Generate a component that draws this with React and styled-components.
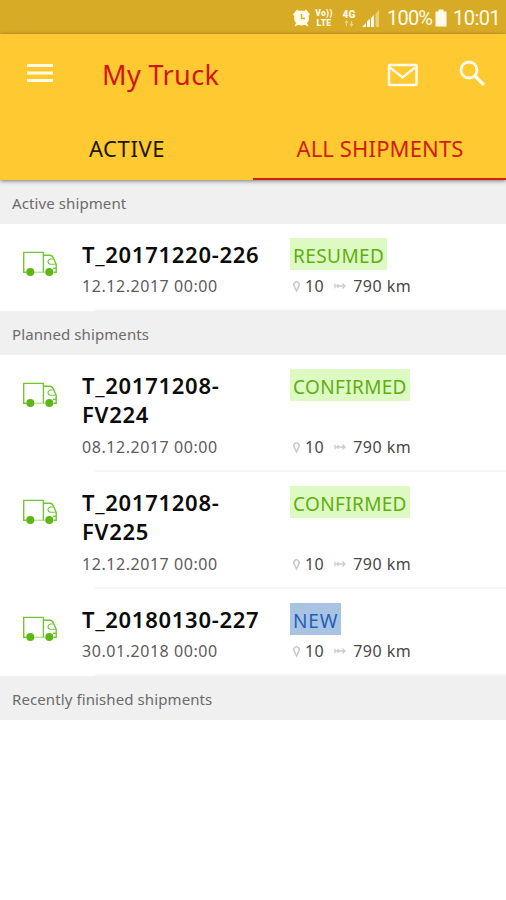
import styled, { createGlobalStyle, css } from "styled-components";

//Styles
const GlobalStyle = createGlobalStyle`
    * {
        box-sizing: border-box;
    }

    body {
        margin: 0;
        background: #fff;
        font-family: "Noto Sans", "Open Sans", sans-serif;
    }
`

const Screen = styled.div`
    width: 506px;
    min-height: 900px;
    background: #fff;
    overflow: hidden;
`

const StatusBar = styled.div`
    display: flex;
    align-items: center;
    justify-content: flex-end;
    height: 34px;
    padding: 2px 7px 0 0;
    background: #d8ab27;
    color: #fffbe8;
    font-family: Roboto, sans-serif;
    font-size: 20px;
    line-height: 32px;
`

const StatusIcon = styled.svg`
    display: block;
    flex: none;
    margin-right: ${({$gap}) => $gap}px;
`

const Stacked = styled.div`
    display: flex;
    flex-direction: column;
    align-items: center;
    width: ${({$width}) => $width}px;
    margin-right: ${({$gap}) => $gap}px;
    font-size: ${({$size}) => $size}px;
    font-weight: 900;
    line-height: 10px;
    letter-spacing: ${({$spacing}) => $spacing || 0}px;
    white-space: nowrap;
`

const Battery = styled.span`
    width: 48px;
    letter-spacing: -0.8px;
    white-space: nowrap;
`

const Clock = styled.span`
    width: 46px;
    text-align: right;
    letter-spacing: -0.5px;
    white-space: nowrap;
`

const Header = styled.header`
    position: relative;
    height: 146px;
    background: #ffc931;
    box-shadow: 0 1px 4px rgba(0, 0, 0, 0.5);
`

const Toolbar = styled.div`
    display: flex;
    align-items: center;
    height: 82px;
    padding: 0 20px 0 26px;
`

const Title = styled.h1`
    flex: 1;
    margin: 0 0 0 48px;
    color: #d0160b;
    font-size: 27px;
    font-weight: 400;
    line-height: 36px;
    letter-spacing: 0.4px;
`

const ToolIcon = styled.svg`
    display: block;
    flex: none;
    margin-left: ${({$left}) => $left || 0}px;
    margin-top: ${({$top}) => $top || 0}px;
`

const Tabs = styled.nav`
    display: flex;
    height: 64px;
`

const Tab = styled.div`
    flex: 1;
    padding: 17px 0 0 1px;
    border-bottom: 2px solid transparent;
    color: #1c1604;
    font-size: 22px;
    line-height: 30px;
    text-align: center;
    letter-spacing: ${({$spacing}) => $spacing}px;

    ${({$active}) => $active && css`
        color: #cf1d0c;
        border-bottom-color: #d2200f;
    `}
`

const SectionTitle = styled.h2`
    height: 44px;
    margin: 0;
    padding-left: 12px;
    background: #f0f0f0;
    color: #6b6b6b;
    font-size: 15px;
    font-weight: 400;
    line-height: 46px;
    letter-spacing: 0.1px;
`

const Row = styled.div`
    display: grid;
    grid-template-columns: 82px 208px 1fr;
    height: ${({$tall}) => $tall ? 117 : 87}px;
    padding: 14px 0 14px;
    background: linear-gradient(#f6f6f6, #f6f6f6) 95px 100% / 411px 2px no-repeat;
`

const TruckIcon = styled.svg`
    display: block;
    margin: 13px 0 0 22px;
`

const Main = styled.div`
    display: flex;
    flex-direction: column;
    justify-content: space-between;
`

const Number = styled.div`
    color: #0c0c0c;
    font-size: 22px;
    font-weight: 600;
    line-height: 29.3px;
    padding-top: 2px;
    letter-spacing: 0.72px;
`

const Small = styled.div`
    color: #5c5c5c;
    font-size: 16px;
    line-height: 22px;
    letter-spacing: 0.55px;
    white-space: nowrap;
`

const Side = styled(Main)`
    align-items: flex-start;
`

const tones = {
    green: ["#defac3", "#5fae12"],
    blue: ["#a9c4e2", "#1f60bb"],
}

const Badge = styled.div`
    height: 32px;
    padding: 0 3px;
    background: ${({$tone}) => tones[$tone][0]};
    color: ${({$tone}) => tones[$tone][1]};
    font-size: 19px;
    line-height: 36px;
    letter-spacing: ${({$spacing}) => $spacing}px;
`

const Meta = styled(Small)`
    display: flex;
    align-items: center;
    color: #484848;
    letter-spacing: 0.45px;
`

const MetaIcon = styled.svg`
    display: block;
    margin: 0 ${({$right}) => $right}px 0 ${({$left}) => $left}px;
`

//Data
const sections = [
    {
        title: "Active shipment",
        rows: [
            { lines: ["T_20171220-226"], date: "12.12.2017 00:00", status: "RESUMED", tone: "green", spacing: 0.43 },
        ],
    },
    {
        title: "Planned shipments",
        rows: [
            { lines: ["T_20171208-", "FV224"], date: "08.12.2017 00:00", status: "CONFIRMED", tone: "green", spacing: 0.35 },
            { lines: ["T_20171208-", "FV225"], date: "12.12.2017 00:00", status: "CONFIRMED", tone: "green", spacing: 0.35 },
            { lines: ["T_20180130-227"], date: "30.01.2018 00:00", status: "NEW", tone: "blue", spacing: 0.9 },
        ],
    },
    { title: "Recently finished shipments", rows: [] },
]

//Components
function Truck() {
    return (
        <TruckIcon width="36" height="26" viewBox="0 0 36 26" fill="none" stroke="#74c437" strokeWidth="1.4">
            <path d="M4.5 21.3H1.7V1.4H21.4V21.3" />
            <path d="M21.4 4.2H28Q30.5 4.4 31.7 7.5L34.2 13.5V21.3H31.5" />
            <path d="M33.5 13.2H28.5Q26 13 26 10.8T28.5 8H31.500" strokeWidth="1.1" />
            <path d="M12 21.3H23.5" strokeOpacity="0.5" />
            <path d="M31 17.3H34.5" strokeWidth="1.4" />
            <circle cx="8.3" cy="21" r="4" fill="#5cb811" stroke="none" />
            <circle cx="27.3" cy="21" r="4" fill="#5cb811" stroke="none" />
        </TruckIcon>
    )
}

function Shipment({ shipment }) {
    return (
        <Row $tall={shipment.lines.length > 1}>
            <Truck />
            <Main>
                <Number>
                    {shipment.lines.map(line => <div key={line}>{line}</div>)}
                </Number>
                <Small>{shipment.date}</Small>
            </Main>
            <Side>
                <Badge $tone={shipment.tone} $spacing={shipment.spacing}>{shipment.status}</Badge>
                <Meta>
                    <MetaIcon $left={2} $right={4} width="9" height="13" viewBox="0 0 9 13" fill="none" stroke="#c9c9c9" strokeWidth="1.5">
                        <path d="M4.5 11L2.2 6A2.700 2.700 0 1 1 6.8 6Z" />
                    </MetaIcon>
                    10
                    <MetaIcon $left={10} $right={7} width="12" height="8" viewBox="0 0 12 8" fill="none" stroke="#cdcdcd" strokeWidth="1.3">
                        <path d="M1 1.8V6.2M1 4H11M8.500 1.500L11 4L8.500 6.500M3.500 2.2L5 4L3.500 5.8" />
                    </MetaIcon>
                    790 km
                </Meta>
            </Side>
        </Row>
    )
}

function App() {
    return (
        <>
            <GlobalStyle />
            <Screen>
                <StatusBar>
                    <StatusIcon $gap={5} width="17" height="18" viewBox="0 0 17 18">
                        <g fill="#fffbe8">
                            <circle cx="8.5" cy="9" r="7.5" />
                            <path d="M0 5.5L4 0.5L6.5 2.5L2 7.5ZM17 5.5L13 0.5L10.5 2.5L15 7.5ZM1.5 17.5L3.5 13L7 15ZM15.5 17.5L13.5 13L10 15Z" />
                        </g>
                        <path d="M8.5 5V9.5H12" fill="none" stroke="#d8ab27" strokeWidth="1.4" />
                    </StatusIcon>
                    <Stacked $width={18} $gap={9} $size={8.5} $spacing={0.3}>
                        <span>Vo))</span>
                        <span>LTE</span>
                    </Stacked>
                    <Stacked $width={14} $gap={6} $size={10} $spacing={0.3}>
                        <span>4G</span>
                        <svg width="10" height="7" viewBox="0 0 10 7" fill="none" stroke="#eed585" strokeWidth="1.2">
                            <path d="M2.5 6V1M1 3L2.5 1L4 3M7.5 1V6M6 4L7.5 6L9 4" />
                        </svg>
                    </Stacked>
                    <StatusIcon $gap={7} width="18" height="18" viewBox="0 0 18 18">
                        <path d="M0 18L4 14V18ZM5 18V12.5L8 9.5V18ZM9 18V9L12 6V18Z" fill="#fffbe8" />
                        <path d="M13.5 18V5L17 1V18Z" fill="#ebcf79" />
                    </StatusIcon>
                    <Battery>100%</Battery>
                    <StatusIcon $gap={6} width="12" height="18" viewBox="0 0 12 18">
                        <path d="M3.5 0.5H8.5V2.5H11.5V17.5H0.5V2.5H3.5Z" fill="#fffbe8" />
                    </StatusIcon>
                    <Clock>10:01</Clock>
                </StatusBar>
                <Header>
                    <Toolbar>
                        <ToolIcon $top={-4} width="28" height="20" viewBox="0 0 28 20" fill="#fffbe8">
                            <path d="M1 1H27V4H1ZM1 8.5H27V11.5H1ZM1 16H27V19H1Z" />
                        </ToolIcon>
                        <Title>My Truck</Title>
                        <ToolIcon width="31" height="24" viewBox="0 0 31 24" fill="none" stroke="#fffbe8" strokeWidth="2.5">
                            <rect x="2" y="2" width="27.5" height="20" rx="1" />
                            <path d="M3 4.5L15.5 14.5L28 4.5" />
                        </ToolIcon>
                        <ToolIcon $left={41} $top={-4} width="27" height="27" viewBox="0 0 27 27" fill="none" stroke="#fffbe8" strokeWidth="2.8">
                            <circle cx="10" cy="10" r="8" />
                            <path d="M15.5 15.5L25 25" strokeWidth="3.4" />
                        </ToolIcon>
                    </Toolbar>
                    <Tabs>
                        <Tab $spacing={0.6}>ACTIVE</Tab>
                        <Tab $spacing={0.15} $active>ALL SHIPMENTS</Tab>
                    </Tabs>
                </Header>
                {sections.map(section => (
                    <section key={section.title}>
                        <SectionTitle>{section.title}</SectionTitle>
                        {section.rows.map((row, i) => <Shipment key={i} shipment={row} />)}
                    </section>
                ))}
            </Screen>
        </>
    )
}

export default App
